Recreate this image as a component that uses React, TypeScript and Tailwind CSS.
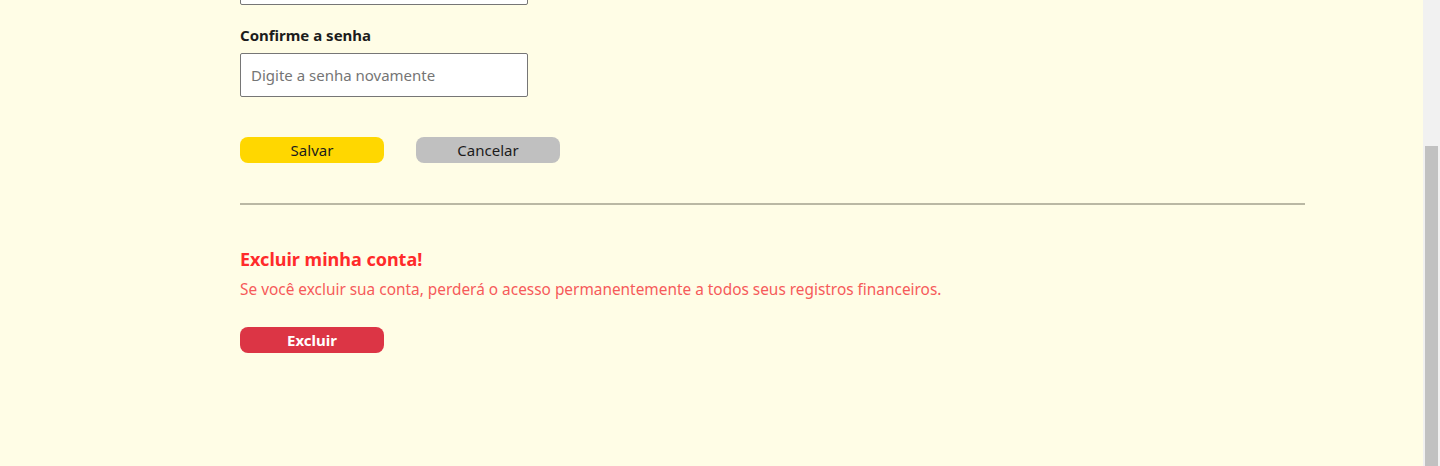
import React from 'react';

const font = { fontFamily: '"Noto Sans", "Open Sans", sans-serif' };

const Field = ({ label, placeholder }: { label: string; placeholder: string }) => (
	<div className="flex flex-col">
		<label className="text-[15px] font-bold text-[#1c1c1c] leading-[20px] mb-[8px]">{label}</label>
		<input
			type="password"
			placeholder={placeholder}
			className="w-[288px] h-[44px] px-[10px] text-[15px] border border-[#767676] rounded-[2px] bg-white placeholder:text-[#757575] outline-none"
		/>
	</div>
);

const App = () => {
	return (
		<div style={font} className="flex h-[466px] overflow-hidden bg-[#fffde6]">
			{/* page is shown scrolled to its bottom */}
			<div className="flex-1 flex flex-col justify-end overflow-hidden">
				<div className="shrink-0 pl-[240px] pt-[40px] pb-[113px]">
					<div className="flex flex-col gap-[20px]">
						<h2 className="text-[22px] font-bold text-[#1c1c1c] leading-[28px]">Alterar senha</h2>
						<Field label="Senha atual" placeholder="Digite a senha atual" />
						<Field label="Nova senha" placeholder="Digite a nova senha" />
						<Field label="Confirme a senha" placeholder="Digite a senha novamente" />
					</div>

					<div className="flex gap-[32px] mt-[40px]">
						<button className="w-[144px] h-[26px] rounded-[8px] bg-[#ffd700] text-[15px] text-[#1c1c1c] leading-[26px]">
							Salvar
						</button>
						<button className="w-[144px] h-[26px] rounded-[8px] bg-[#c0c0c0] text-[15px] text-[#1c1c1c] leading-[26px]">
							Cancelar
						</button>
					</div>

					<hr className="w-[1065px] mt-[40px] border-0 border-t-2 border-[#bab8a4]" />

					<div className="mt-[42px] flex flex-col">
						<h3 className="text-[18px] font-bold text-[#ff2b2b] leading-[24px]">Excluir minha conta!</h3>
						<p className="mt-[9px] text-[15.4px] text-[#f65a5a] leading-[20px]">
							Se você excluir sua conta, perderá o acesso permanentemente a todos seus registros financeiros.
						</p>
						<button className="mt-[27px] w-[144px] h-[26px] rounded-[8px] bg-[#dc3545] text-[15px] font-bold text-white leading-[26px]">
							Excluir
						</button>
					</div>
				</div>
			</div>

			{/* scrollbar */}
			<div className="w-[17px] shrink-0 flex flex-col bg-[#f1f1f1]">
				<div className="h-[146px] shrink-0" />
				<div className="flex-1 mx-[2px] bg-[#c1c1c1]" />
			</div>
		</div>
	);
};

export default App;
